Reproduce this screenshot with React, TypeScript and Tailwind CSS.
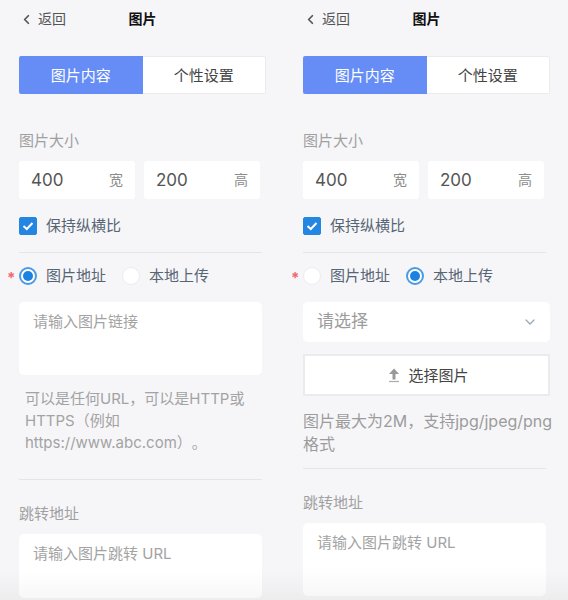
import { useState, type ReactNode } from "react";
import { ChevronDown, ChevronLeft } from "lucide-react";

type Source = "url" | "upload";

function SizeField({ id, value, unit }: { id: string; value: string; unit: string }) {
  return (
    <div className="flex h-[38px] min-w-0 flex-1 items-center rounded-[3px] bg-white px-3">
      <input
        id={id}
        defaultValue={value}
        inputMode="numeric"
        className="w-full min-w-0 flex-1 bg-transparent text-[17px] leading-[22px] text-[#555] outline-none"
      />
      <label htmlFor={id} className="shrink-0 text-[14px] leading-[22px] text-[#8c8c8c]">
        {unit}
      </label>
    </div>
  );
}

function SourceOption({
  id,
  group,
  label,
  checked,
  onSelect,
}: {
  id: string;
  group: string;
  label: string;
  checked: boolean;
  onSelect: () => void;
}) {
  return (
    <div className="flex items-center">
      <span className="grid size-[18px] place-items-center">
        <input
          id={id}
          type="radio"
          name={group}
          checked={checked}
          onChange={onSelect}
          className="peer col-start-1 row-start-1 size-[18px] appearance-none rounded-full border border-[#ececf0] bg-white checked:border-2 checked:border-[#4a9be6]"
        />
        <span className="pointer-events-none col-start-1 row-start-1 hidden size-[10px] rounded-full bg-[#1c82e0] peer-checked:block" />
      </span>
      <label htmlFor={id} className="pl-[9px] text-[15px] leading-[22px] text-[#566573]">
        {label}
      </label>
    </div>
  );
}

function Divider({ className }: { className: string }) {
  return <hr className={`mr-1 border-0 border-t border-[#e4e5e8] ${className}`} />;
}

function UploadIcon() {
  return (
    <svg viewBox="0 0 12 16" className="h-4 w-3" aria-hidden="true">
      <path d="M6 0.5L11 6H7.5V11.5H4.5V6H1Z" fill="#999" />
      <path d="M1 13.5H11" stroke="#aaa" strokeWidth="1.2" />
    </svg>
  );
}

function UrlSource({ id }: { id: string }) {
  return (
    <>
      <textarea
        id={`${id}-url`}
        aria-label="图片地址"
        placeholder="请输入图片链接"
        className="mt-[15px] mr-1 block h-[73px] resize-none rounded-[5px] bg-white px-[14px] py-[9px] text-[15px] leading-[22px] outline-none placeholder:text-[#a3a3a3]"
      />
      <p className="mt-[13px] pr-3 pl-[6px] text-[15px] leading-[22px] text-[#a3a3a3] [text-spacing-trim:space-all]">
        可以是任何URL，可以是HTTP或HTTPS（例如 https://www.abc.com）。
      </p>
      <Divider className="mt-[25px]" />
    </>
  );
}

function UploadSource({ id }: { id: string }) {
  return (
    <>
      <div className="mt-[15px] grid items-center">
        <select
          id={`${id}-file`}
          aria-label="本地上传"
          className="col-start-1 row-start-1 h-10 w-full appearance-none rounded-[5px] bg-white px-[14px] text-[17px] text-[#9c9c9c] outline-none"
        >
          <option>请选择</option>
        </select>
        <ChevronDown
          className="pointer-events-none col-start-1 row-start-1 mr-3 size-4 justify-self-end text-[#9aa5b1]"
          strokeWidth={1.8}
        />
      </div>
      <button
        type="button"
        className="mt-3 flex h-[42px] items-center justify-center gap-2 border-2 border-[#ebebee] bg-white pt-[2px] pl-1 text-[15px] leading-[22px] text-[#444]"
      >
        <UploadIcon />
        选择图片
      </button>
      <p className="mt-[14px] -mr-2 text-[16px] leading-[23px] text-[#9c9c9c]">
        图片最大为2M，支持jpg/jpeg/png
        <wbr />
        格式
      </p>
      <Divider className="mt-3" />
    </>
  );
}

function ImagePanel({ id, initial, children }: { id: string; initial: Source; children?: ReactNode }) {
  const [source, setSource] = useState<Source>(initial);

  return (
    <section className="flex min-w-0 flex-col pr-[18px] pl-[19px]">
      <header className="grid h-[38px] grid-cols-[1fr_auto_1fr] items-center">
        <button type="button" className="flex items-center gap-1 text-[14px] leading-[22px] text-[#555]">
          <ChevronLeft className="size-[15px]" strokeWidth={2.8} />
          返回
        </button>
        <h1 className="text-[14px] leading-[22px] font-bold text-[#111]">图片</h1>
      </header>

      <div className="mt-[18px] grid h-[38px] grid-cols-2 text-[15px] leading-[22px]">
        <button type="button" className="rounded-l-[2px] bg-[#658df5] pt-px text-white">
          图片内容
        </button>
        <button type="button" className="rounded-r-[2px] border border-l-0 border-[#ebebee] bg-white pt-px text-[#444]">
          个性设置
        </button>
      </div>

      <h2 className="mt-9 text-[15px] leading-[22px] text-[#a0a0a0]">图片大小</h2>
      <div className="mt-[9px] mr-[6px] flex gap-[9px]">
        <SizeField id={`${id}-width`} value="400" unit="宽" />
        <SizeField id={`${id}-height`} value="200" unit="高" />
      </div>

      <div className="mt-4 flex items-center">
        <span className="grid size-[18px] place-items-center">
          <input
            id={`${id}-ratio`}
            type="checkbox"
            defaultChecked
            className="peer col-start-1 row-start-1 size-[18px] appearance-none rounded-[2px] border border-[#d5d8dc] bg-white checked:border-[#2386e0] checked:bg-[#2386e0]"
          />
          <svg
            viewBox="0 0 12 12"
            className="pointer-events-none col-start-1 row-start-1 hidden size-3 peer-checked:block"
            fill="none"
            stroke="white"
            strokeWidth="2"
            aria-hidden="true"
          >
            <path d="M1.5 6L4.8 9L10.5 3" />
          </svg>
        </span>
        <label htmlFor={`${id}-ratio`} className="pl-[9px] text-[15px] leading-[22px] text-[#566573]">
          保持纵横比
        </label>
      </div>

      <Divider className="mt-[15px]" />

      <div className="mt-3 -ml-3 flex items-center">
        <span className="w-3 pt-1 text-[15px] leading-[18px] font-bold text-[#f0686c]">*</span>
        <div className="flex gap-4">
          <SourceOption
            id={`${id}-source-url`}
            group={`${id}-source`}
            label="图片地址"
            checked={source === "url"}
            onSelect={() => setSource("url")}
          />
          <SourceOption
            id={`${id}-source-upload`}
            group={`${id}-source`}
            label="本地上传"
            checked={source === "upload"}
            onSelect={() => setSource("upload")}
          />
        </div>
      </div>

      {source === "url" ? <UrlSource id={id} /> : <UploadSource id={id} />}

      <label htmlFor={`${id}-link`} className="mt-[23px] text-[15px] leading-[22px] text-[#a0a0a0]">
        跳转地址
      </label>
      {children}
    </section>
  );
}

const linkBox =
  "mt-[9px] mr-1 block resize-none rounded-[5px] bg-linear-to-b from-white from-60% to-[#f7f7f7] px-[14px] py-[9px] text-[15px] leading-[22px] outline-none placeholder:text-[#a3a3a3]";

export default function App() {
  return (
    <main className="grid min-h-screen grid-cols-2 bg-[#f6f6f9] bg-linear-to-b from-[#f6f6f9] from-95% to-[#ededee] font-[Inter,'Noto_Sans_CJK_SC',sans-serif]">
      <ImagePanel id="left" initial="url">
        <textarea id="left-link" placeholder="请输入图片跳转 URL" className={`h-16 ${linkBox}`} />
      </ImagePanel>
      <ImagePanel id="right" initial="upload">
        <textarea id="right-link" placeholder="请输入图片跳转 URL" className={`h-[73px] ${linkBox}`} />
      </ImagePanel>
    </main>
  );
}
